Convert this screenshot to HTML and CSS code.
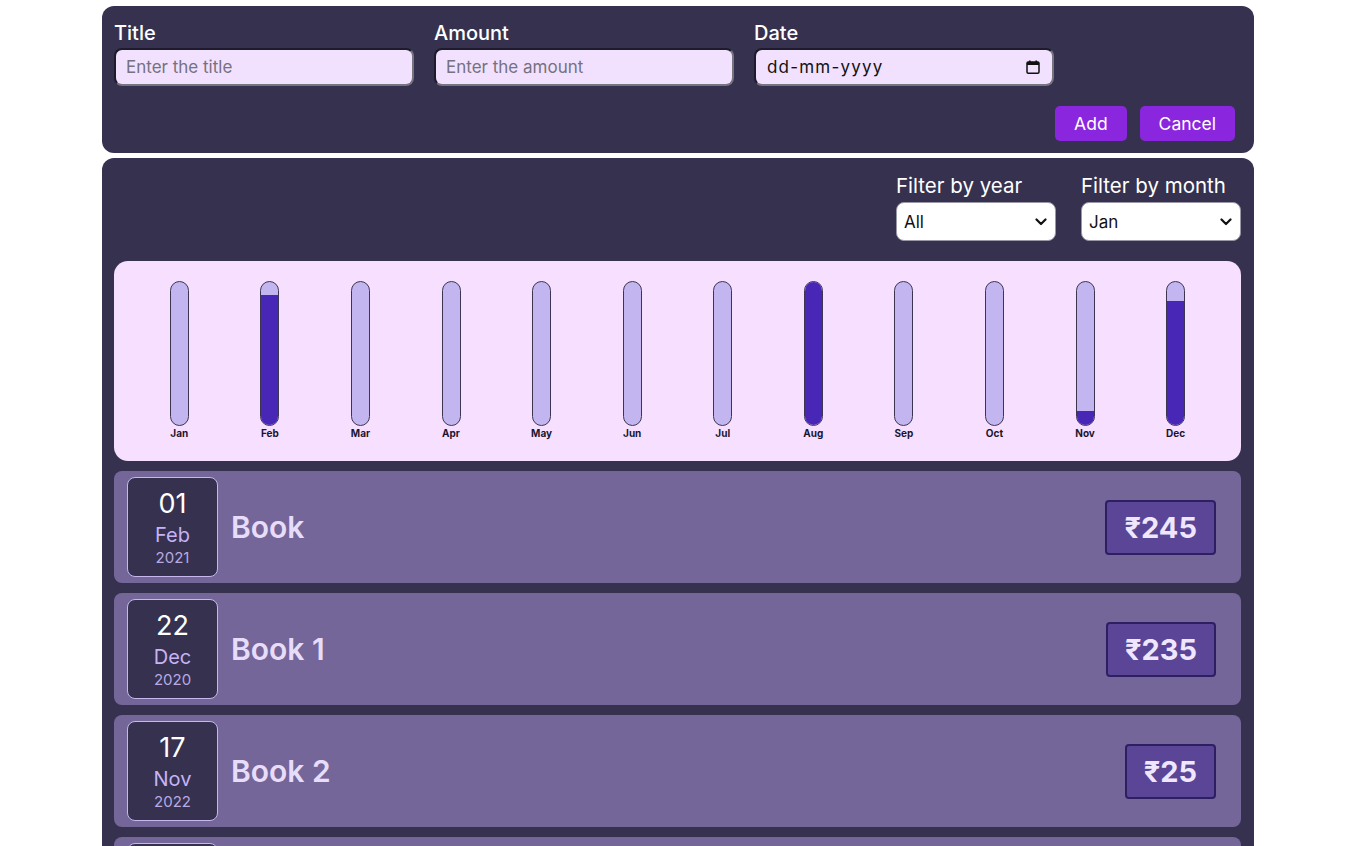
FILE: index.html
```html
<!DOCTYPE html>
<html lang="en">
<head>
<meta charset="utf-8">
<title>Expenses</title>
<link rel="stylesheet" href="styles.css">
</head>
<body>
<div class="app">
  <section class="new-expense">
    <form class="expense-form">
      <div class="controls">
        <div class="control">
          <label class="control-label">Title</label>
          <input class="field" type="text" placeholder="Enter the title">
        </div>
        <div class="control">
          <label class="control-label">Amount</label>
          <input class="field" type="text" placeholder="Enter the amount">
        </div>
        <div class="control">
          <label class="control-label">Date</label>
          <div class="field date-field">
            <input class="date-input" type="text" placeholder="dd-mm-yyyy">
            <svg class="cal-icon" width="14" height="14" viewBox="0 0 14 14" aria-hidden="true">
              <rect x="3" y="0.5" width="1.6" height="2.5" fill="#111"/>
              <rect x="9.4" y="0.5" width="1.6" height="2.5" fill="#111"/>
              <rect x="1" y="2" width="12" height="11.2" rx="1.2" fill="none" stroke="#111" stroke-width="1.5"/>
              <rect x="1" y="2" width="12" height="3" fill="#111"/>
            </svg>
          </div>
        </div>
      </div>
      <div class="actions">
        <button type="button" class="btn">Add</button>
        <button type="button" class="btn">Cancel</button>
      </div>
    </form>
  </section>

  <section class="expenses">
    <div class="filters">
      <div class="filter">
        <label class="filter-label">Filter by year</label>
        <div class="select-wrap">
          <select class="filter-select"><option>All</option></select>
          <svg class="chevron" width="12" height="8" viewBox="0 0 12 8" aria-hidden="true"><path d="M1.5 1.5 6 6l4.5-4.5" fill="none" stroke="#111" stroke-width="2.2" stroke-linecap="round" stroke-linejoin="round"/></svg>
        </div>
      </div>
      <div class="filter">
        <label class="filter-label">Filter by month</label>
        <div class="select-wrap">
          <select class="filter-select"><option>Jan</option></select>
          <svg class="chevron" width="12" height="8" viewBox="0 0 12 8" aria-hidden="true"><path d="M1.5 1.5 6 6l4.5-4.5" fill="none" stroke="#111" stroke-width="2.2" stroke-linecap="round" stroke-linejoin="round"/></svg>
        </div>
      </div>
    </div>

    <div class="chart">
      <div class="chart-bar"><div class="bar-inner"><div class="bar-fill" style="height:0%"></div></div><div class="bar-label">Jan</div></div>
      <div class="chart-bar"><div class="bar-inner"><div class="bar-fill" style="height:91%"></div></div><div class="bar-label">Feb</div></div>
      <div class="chart-bar"><div class="bar-inner"><div class="bar-fill" style="height:0%"></div></div><div class="bar-label">Mar</div></div>
      <div class="chart-bar"><div class="bar-inner"><div class="bar-fill" style="height:0%"></div></div><div class="bar-label">Apr</div></div>
      <div class="chart-bar"><div class="bar-inner"><div class="bar-fill" style="height:0%"></div></div><div class="bar-label">May</div></div>
      <div class="chart-bar"><div class="bar-inner"><div class="bar-fill" style="height:0%"></div></div><div class="bar-label">Jun</div></div>
      <div class="chart-bar"><div class="bar-inner"><div class="bar-fill" style="height:0%"></div></div><div class="bar-label">Jul</div></div>
      <div class="chart-bar"><div class="bar-inner"><div class="bar-fill" style="height:100%"></div></div><div class="bar-label">Aug</div></div>
      <div class="chart-bar"><div class="bar-inner"><div class="bar-fill" style="height:0%"></div></div><div class="bar-label">Sep</div></div>
      <div class="chart-bar"><div class="bar-inner"><div class="bar-fill" style="height:0%"></div></div><div class="bar-label">Oct</div></div>
      <div class="chart-bar"><div class="bar-inner"><div class="bar-fill" style="height:9.5%"></div></div><div class="bar-label">Nov</div></div>
      <div class="chart-bar"><div class="bar-inner"><div class="bar-fill" style="height:87%"></div></div><div class="bar-label">Dec</div></div>
    </div>

    <ul class="expense-list">
      <li class="expense-item">
        <div class="expense-date"><div class="date-day">01</div><div class="date-month">Feb</div><div class="date-year">2021</div></div>
        <h2 class="expense-title">Book</h2>
        <div class="expense-price">₹245</div>
      </li>
      <li class="expense-item">
        <div class="expense-date"><div class="date-day">22</div><div class="date-month">Dec</div><div class="date-year">2020</div></div>
        <h2 class="expense-title">Book 1</h2>
        <div class="expense-price">₹235</div>
      </li>
      <li class="expense-item">
        <div class="expense-date"><div class="date-day">17</div><div class="date-month">Nov</div><div class="date-year">2022</div></div>
        <h2 class="expense-title">Book 2</h2>
        <div class="expense-price">₹25</div>
      </li>
      <li class="expense-item">
        <div class="expense-date"><div class="date-day">08</div><div class="date-month">Aug</div><div class="date-year">2021</div></div>
        <h2 class="expense-title">Book 3</h2>
        <div class="expense-price">₹270</div>
      </li>
    </ul>
  </section>
</div>
</body>
</html>
```

FILE: styles.css
```css
* { box-sizing: border-box; }

html, body {
  margin: 0;
  padding: 0;
  background: #ffffff;
  font-family: Inter, "Open Sans", "Noto Sans", sans-serif;
}

.app {
  width: 1152px;
  margin: 6px 0 0 102px;
}

/* ---------- new expense form ---------- */
.new-expense {
  background: #35314f;
  border-radius: 12px;
  padding: 13px 19px 12px 12px;
}

.controls {
  display: flex;
  gap: 20px;
}

.control {
  display: flex;
  flex-direction: column;
  width: 300px;
}

.control-label {
  color: #ffffff;
  font-size: 20px;
  font-weight: 500;
  line-height: 28px;
  margin-bottom: 1px;
}

.field {
  height: 38px;
  width: 300px;
  background: #f1e1fe;
  border-style: solid;
  border-width: 2px;
  border-color: #1e1b2b #77737f #77737f #1e1b2b;
  border-radius: 8px;
  padding: 0 10px;
  font-family: inherit;
  font-size: 17px;
  color: #111;
}

.field::placeholder { color: #76717e; }

.date-field {
  display: flex;
  align-items: center;
  justify-content: space-between;
  padding: 0 12px 0 11px;
}

.date-input {
  border: 0;
  background: transparent;
  font-family: inherit;
  font-size: 17px;
  padding: 0;
  width: 200px;
  outline: none;
}

.date-input::placeholder { color: #111; letter-spacing: 1.2px; }

.cal-icon { display: block; }

.actions {
  display: flex;
  justify-content: flex-end;
  gap: 13px;
  margin-top: 20px;
}

.btn {
  height: 35px;
  padding: 0 19px;
  background: #8b26df;
  color: #ffffff;
  border: 0;
  border-radius: 5px;
  font-family: inherit;
  font-size: 17.5px;
  cursor: pointer;
}

/* ---------- expenses ---------- */
.expenses {
  margin-top: 5px;
  background: #35314f;
  border-radius: 12px;
  padding: 14px 13px 20px 12px;
}

.filters {
  display: flex;
  justify-content: flex-end;
  gap: 25px;
}

.filter {
  display: flex;
  flex-direction: column;
  width: 160px;
}

.filter-label {
  color: #ffffff;
  font-size: 20.5px;
  line-height: 28px;
  margin-bottom: 2px;
  white-space: nowrap;
}

.select-wrap {
  position: relative;
}

.filter-select {
  appearance: none;
  -webkit-appearance: none;
  display: block;
  height: 39px;
  width: 160px;
  background: #ffffff;
  border: 1px solid #9a97a6;
  border-radius: 8px;
  padding: 0 28px 0 7px;
  font-family: inherit;
  font-size: 17px;
  color: #111;
}

.chevron {
  position: absolute;
  right: 9px;
  top: 16px;
  pointer-events: none;
}

.chart {
  margin-top: 20px;
  height: 200px;
  background: #f7dfff;
  border-radius: 14px;
  padding: 20px 20px 0;
  display: flex;
}

.chart-bar {
  flex: 1;
  display: flex;
  flex-direction: column;
  align-items: center;
}

.bar-inner {
  width: 19px;
  height: 145px;
  background: #c3b6f0;
  border: 1px solid #3d3650;
  border-radius: 10px;
  overflow: hidden;
  display: flex;
  flex-direction: column;
  justify-content: flex-end;
}

.bar-fill {
  width: 100%;
  background: #4827b6;
}

.bar-label {
  margin-top: 1px;
  font-size: 10px;
  font-weight: 700;
  line-height: 12px;
  color: #1a1530;
}

.expense-list {
  list-style: none;
  margin: 10px 0 0;
  padding: 0;
  display: flex;
  flex-direction: column;
  gap: 10px;
}

.expense-item {
  display: flex;
  align-items: center;
  background: #756699;
  border-radius: 8px;
  padding: 6px 25px 6px 13px;
}

.expense-date {
  width: 91px;
  height: 100px;
  background: #35314f;
  border: 1px solid #c6b7ee;
  border-radius: 8px;
  display: flex;
  flex-direction: column;
  align-items: center;
  justify-content: center;
}

.date-day {
  color: #ffffff;
  font-size: 27px;
  line-height: 30px;
  margin-top: 2px;
}

.date-month {
  color: #c7b3f4;
  font-size: 20px;
  line-height: 26px;
  margin-top: 3px;
}

.date-year {
  color: #b9a9e3;
  font-size: 15px;
  line-height: 20px;
}

.expense-title {
  flex: 1;
  margin: 0 0 0 13px;
  color: #e7ddfa;
  font-size: 30px;
  font-weight: 600;
}

.expense-price {
  background: #5a4597;
  border: 2px solid #2e1f62;
  border-radius: 4px;
  padding: 0 17px;
  height: 55px;
  display: flex;
  align-items: center;
  color: #efe6ff;
  font-size: 29px;
  font-weight: 700;
}
```
